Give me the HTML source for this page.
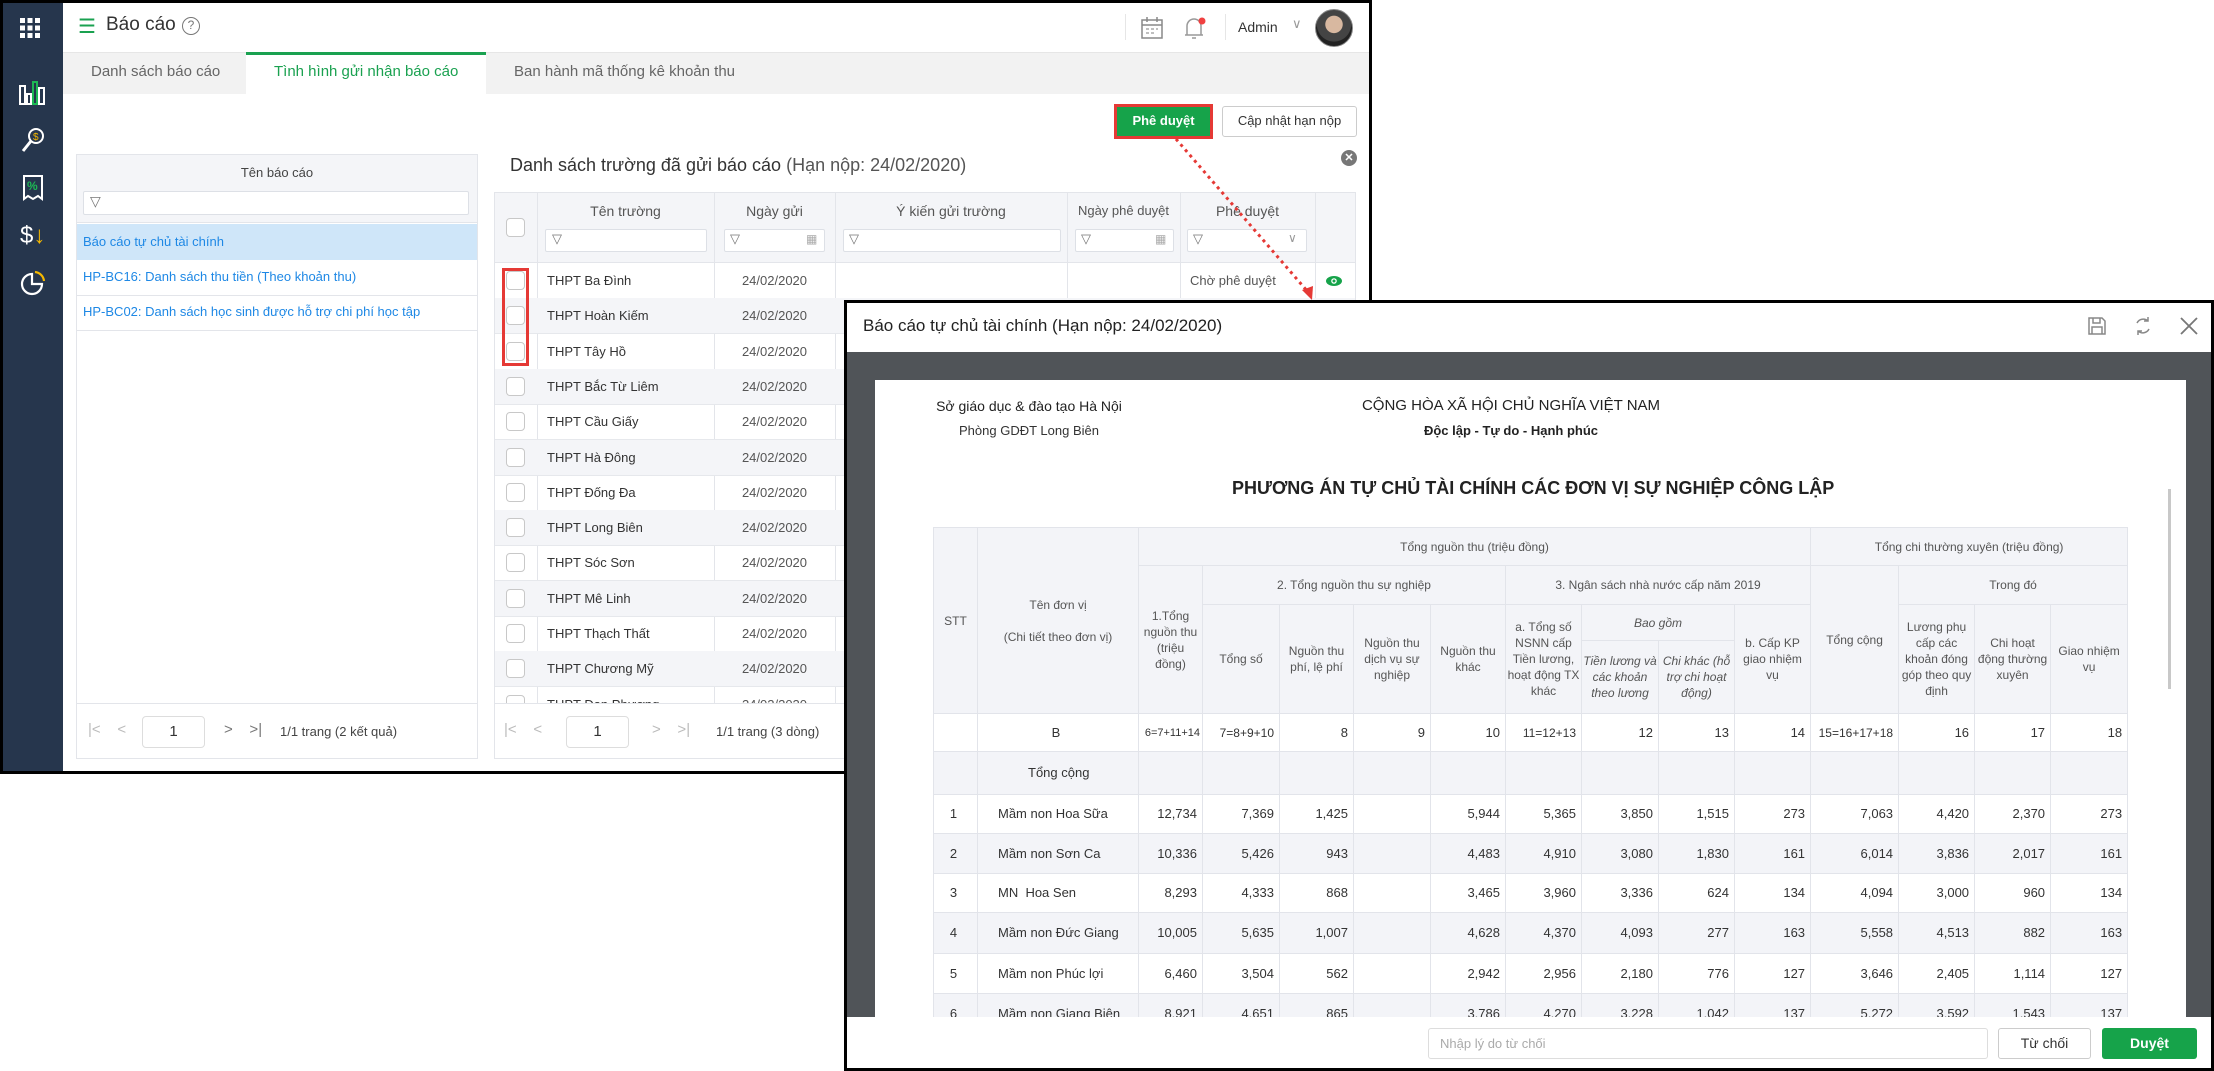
<!DOCTYPE html>
<html><head><meta charset="utf-8"><style>
*{box-sizing:border-box;margin:0;padding:0}
body{width:2214px;height:1071px;position:relative;background:#fff;font-family:"Liberation Sans",sans-serif;color:#333;overflow:hidden}
.a{position:absolute}
.t{position:absolute;white-space:nowrap}
.cb{position:absolute;width:19px;height:19px;border:1px solid #c8c8c8;border-radius:4px;background:#fff}
.fil{position:absolute;background:#fff;border:1px solid #dde0e6;border-radius:2px}
.ft{font-size:14px;color:#555}
table.r{position:absolute;left:933px;top:527px;border-collapse:collapse;table-layout:fixed;width:1194px;font-size:12px;color:#555}
table.r td{border:1px solid #e2e4ea;text-align:center;line-height:16px;padding:0 1px}
table.r thead td{background:#f3f4f8}
table.r tbody td{text-align:right;padding-right:5px;font-size:13px;color:#333}
table.r tbody tr.g td{background:#f3f4f8}
</style></head><body>

<div class="a" style="left:0;top:0;width:1372px;height:774px;border:3px solid #000;background:#fff"></div>
<div class="a" style="left:3px;top:3px;width:60px;height:768px;background:#26364d"></div>
<svg class="a" style="left:18px;top:16px" width="24" height="24" viewBox="0 0 24 24" fill="#fff"><g><rect x="2" y="2" width="5" height="5"/><rect x="9.5" y="2" width="5" height="5"/><rect x="17" y="2" width="5" height="5"/><rect x="2" y="9.5" width="5" height="5"/><rect x="9.5" y="9.5" width="5" height="5"/><rect x="17" y="9.5" width="5" height="5"/><rect x="2" y="17" width="5" height="5"/><rect x="9.5" y="17" width="5" height="5"/><rect x="17" y="17" width="5" height="5"/></g></svg>
<svg class="a" style="left:18px;top:80px" width="28" height="26" viewBox="0 0 28 26" fill="none" stroke-width="2"><rect x="2" y="6" width="5" height="18" stroke="#fff"/><rect x="9" y="14" width="4" height="10" stroke="#fff"/><rect x="15" y="2" width="4" height="22" stroke="#1db954"/><rect x="21" y="8" width="5" height="16" stroke="#fff"/></svg>
<svg class="a" style="left:20px;top:126px" width="26" height="28" viewBox="0 0 26 28" fill="none" stroke="#fff" stroke-width="2"><circle cx="16" cy="10" r="7"/><path d="M11 15 L3 25" stroke-width="3"/><text x="13" y="14" font-size="10" fill="#f5b800" stroke="none" font-family="Liberation Sans">$</text></svg>
<svg class="a" style="left:22px;top:174px" width="22" height="28" viewBox="0 0 22 28" fill="none" stroke="#fff" stroke-width="2"><path d="M2 2 H20 V25 L16 22 L11 25 L6 22 L2 25 Z"/><text x="5" y="16" font-size="12" fill="#1db954" stroke="none" font-family="Liberation Sans" font-weight="bold">%</text></svg>
<div class="t" style="left:20px;top:222px;font-size:24px;color:#fff">$<span style="color:#f5b800">↓</span></div>
<svg class="a" style="left:20px;top:270px" width="26" height="26" viewBox="0 0 26 26" fill="none" stroke-width="2.2"><path d="M12 4 A10 10 0 1 0 22 14 H12 Z" stroke="#fff"/><path d="M15 2 A10 10 0 0 1 24 11" stroke="#f5b800"/></svg>

<div class="a" style="left:63px;top:3px;width:1306px;height:50px;background:#fff;border-bottom:1px solid #e6e6e6"></div>
<div class="t" style="left:78px;top:14px;font-size:20px;color:#1aa150">☰</div>
<div class="t" style="left:106px;top:14px;font-size:19px;color:#333">Báo cáo</div>
<div class="a" style="left:182px;top:17px;width:18px;height:18px;border:1.5px solid #777;border-radius:50%;font-size:12px;color:#777;text-align:center;line-height:15px">?</div>
<div class="a" style="left:1125px;top:14px;width:1px;height:26px;background:#e6e6e6"></div>
<svg class="a" style="left:1140px;top:16px" width="24" height="24" viewBox="0 0 24 24" fill="none" stroke="#888" stroke-width="1.5"><rect x="2" y="4" width="20" height="18"/><path d="M2 9 H22 M7 1 V6 M17 1 V6"/><path d="M6 13 H9 M11 13 H14 M16 13 H18 M6 17 H9 M11 17 H14" stroke="#aaa"/></svg>
<svg class="a" style="left:1182px;top:14px" width="26" height="28" viewBox="0 0 26 28" fill="none" stroke="#999" stroke-width="1.5"><path d="M5 21 V12 A7 7 0 0 1 19 12 V21 Z M3 21 H21 M10 24 H14"/><circle cx="20" cy="7" r="3.5" fill="#f04040" stroke="none"/></svg>
<div class="a" style="left:1225px;top:14px;width:1px;height:26px;background:#e6e6e6"></div>
<div class="t" style="left:1238px;top:19px;font-size:14px;color:#333">Admin</div>
<div class="t" style="left:1292px;top:16px;font-size:13px;color:#999">∨</div>
<div class="a" style="left:1315px;top:9px;width:38px;height:38px;border-radius:50%;background:radial-gradient(circle at 50% 40%,#d8b8a0 0 30%,#444 32% 60%,#222 62%);border:1px solid #888"></div>

<div class="a" style="left:63px;top:53px;width:1306px;height:41px;background:#f2f2f2"></div>
<div class="a" style="left:246px;top:52px;width:240px;height:42px;background:#fff;border-top:3px solid #1aa150"></div>
<div class="t" style="left:91px;top:63px;font-size:15px;color:#666">Danh sách báo cáo</div>
<div class="t" style="left:274px;top:63px;font-size:15px;color:#1aa150">Tình hình gửi nhận báo cáo</div>
<div class="t" style="left:514px;top:63px;font-size:15px;color:#666">Ban hành mã thống kê khoản thu</div>

<div class="a" style="left:1114px;top:104px;width:99px;height:35px;border:3px solid #e53935;background:#16a34a"></div>
<div class="t" style="left:1114px;top:113px;width:99px;text-align:center;font-size:13px;font-weight:bold;color:#fff">Phê duyệt</div>
<div class="a" style="left:1222px;top:106px;width:135px;height:31px;border:1px solid #ccc;border-radius:3px;background:#fff"></div>
<div class="t" style="left:1222px;top:113px;width:135px;text-align:center;font-size:13px;color:#333">Cập nhật hạn nộp</div>

<div class="a" style="left:76px;top:154px;width:402px;height:605px;border:1px solid #e3e5ea;background:#fff"></div>
<div class="a" style="left:77px;top:155px;width:400px;height:68px;background:#f4f5f8;border-bottom:1px solid #e3e5ea"></div>
<div class="t" style="left:77px;top:165px;width:400px;text-align:center;font-size:13px;color:#444">Tên báo cáo</div>
<div class="fil" style="left:83px;top:191px;width:386px;height:24px"></div>
<div class="t" style="left:90px;top:193px;font-size:14px;color:#777">▽</div>
<div class="a" style="left:77px;top:224px;width:400px;height:36px;background:#cfe6f9"></div>
<div class="t" style="left:83px;top:234px;font-size:13px;color:#1e88e5">Báo cáo tự chủ tài chính</div>
<div class="a" style="left:77px;top:295px;width:400px;height:1px;background:#e3e5ea"></div>
<div class="t" style="left:83px;top:269px;font-size:13px;color:#1e88e5">HP-BC16: Danh sách thu tiền (Theo khoản thu)</div>
<div class="a" style="left:77px;top:330px;width:400px;height:1px;background:#e3e5ea"></div>
<div class="t" style="left:83px;top:304px;font-size:13px;color:#1e88e5">HP-BC02: Danh sách học sinh được hỗ trợ chi phí học tập</div>
<div class="a" style="left:77px;top:703px;width:400px;height:1px;background:#e3e5ea"></div>
<div class="t" style="left:88px;top:721px;font-size:15px;color:#bbb">|&lt;&nbsp;&nbsp;&nbsp;&nbsp;&lt;</div>
<div class="a" style="left:142px;top:716px;width:63px;height:32px;border:1px solid #ddd;border-radius:4px"></div>
<div class="t" style="left:142px;top:723px;width:63px;text-align:center;font-size:15px">1</div>
<div class="t" style="left:224px;top:721px;font-size:15px;color:#777">&gt;&nbsp;&nbsp;&nbsp;&nbsp;&gt;|</div>
<div class="t" style="left:280px;top:724px;font-size:13px;color:#444">1/1 trang (2 kết quả)</div>

<div class="t" style="left:510px;top:155px;font-size:18px;color:#333">Danh sách trường đã gửi báo cáo <span style="color:#555">(Hạn nộp: 24/02/2020)</span></div>
<div class="a" style="left:1341px;top:150px;width:16px;height:16px;border-radius:50%;background:#777;color:#fff;font-size:11px;text-align:center;line-height:16px;font-weight:bold">✕</div>
<div class="a" style="left:494px;top:192px;width:862px;height:567px;border:1px solid #e3e5ea"></div>
<div class="a" style="left:495px;top:193px;width:860px;height:70px;background:#f4f5f8;border-bottom:1px solid #e3e5ea"></div>
<div class="a" style="left:537px;top:193px;width:1px;height:510px;background:#e3e5ea"></div>
<div class="a" style="left:714px;top:193px;width:1px;height:510px;background:#e3e5ea"></div>
<div class="a" style="left:835px;top:193px;width:1px;height:510px;background:#e3e5ea"></div>
<div class="a" style="left:1067px;top:193px;width:1px;height:105px;background:#e3e5ea"></div>
<div class="a" style="left:1180px;top:193px;width:1px;height:105px;background:#e3e5ea"></div>
<div class="a" style="left:1315px;top:193px;width:1px;height:105px;background:#e3e5ea"></div>
<div class="cb" style="left:506px;top:218px"></div>
<div class="t ft" style="left:537px;top:203px;width:177px;text-align:center">Tên trường</div>
<div class="t ft" style="left:714px;top:203px;width:121px;text-align:center">Ngày gửi</div>
<div class="t ft" style="left:835px;top:203px;width:232px;text-align:center">Ý kiến gửi trường</div>
<div class="t ft" style="left:1067px;top:203px;width:113px;text-align:center;font-size:13px">Ngày phê duyệt</div>
<div class="t ft" style="left:1180px;top:203px;width:135px;text-align:center">Phê duyệt</div>
<div class="fil" style="left:545px;top:229px;width:162px;height:23px"></div><div class="t" style="left:552px;top:231px;font-size:13px;color:#777">▽</div>
<div class="fil" style="left:724px;top:229px;width:101px;height:23px"></div><div class="t" style="left:730px;top:231px;font-size:13px;color:#777">▽</div><div class="t" style="left:806px;top:232px;font-size:12px;color:#aaa">▦</div>
<div class="fil" style="left:843px;top:229px;width:218px;height:23px"></div><div class="t" style="left:849px;top:231px;font-size:13px;color:#777">▽</div>
<div class="fil" style="left:1075px;top:229px;width:99px;height:23px"></div><div class="t" style="left:1081px;top:231px;font-size:13px;color:#777">▽</div><div class="t" style="left:1155px;top:232px;font-size:12px;color:#aaa">▦</div>
<div class="fil" style="left:1187px;top:229px;width:120px;height:23px"></div><div class="t" style="left:1193px;top:231px;font-size:13px;color:#777">▽</div><div class="t" style="left:1288px;top:231px;font-size:12px;color:#999">∨</div>
<div class="t" style="left:1190px;top:273px;font-size:13px;color:#555">Chờ phê duyệt</div>
<svg class="a" style="left:1325px;top:275px" width="18" height="12" viewBox="0 0 18 12"><ellipse cx="9" cy="6" rx="8" ry="5" fill="#16a34a"/><circle cx="9" cy="6" r="2.8" fill="#fff"/><circle cx="9" cy="6" r="1.5" fill="#16a34a"/></svg>

<div id="rows"></div>
<div class="a" style="left:495px;top:703px;width:860px;height:1px;background:#e3e5ea"></div>
<div class="a" style="left:495px;top:704px;width:860px;height:54px;background:#fff"></div>
<div class="t" style="left:504px;top:721px;font-size:15px;color:#bbb">|&lt;&nbsp;&nbsp;&nbsp;&nbsp;&lt;</div>
<div class="a" style="left:566px;top:716px;width:63px;height:32px;border:1px solid #ddd;border-radius:4px"></div>
<div class="t" style="left:566px;top:723px;width:63px;text-align:center;font-size:15px">1</div>
<div class="t" style="left:652px;top:721px;font-size:15px;color:#bbb">&gt;&nbsp;&nbsp;&nbsp;&nbsp;&gt;|</div>
<div class="t" style="left:716px;top:724px;font-size:13px;color:#444">1/1 trang (3 dòng)</div>

<div class="a" style="left:502px;top:268px;width:27px;height:98px;border:3px solid #e53935"></div>

<svg class="a" style="left:0;top:0" width="2214" height="1071"><line x1="1176" y1="139" x2="1308" y2="292" stroke="#e53935" stroke-width="3" stroke-dasharray="3 4"/><path d="M1302 290 L1312 300 L1313 286 Z" fill="#e53935"/></svg>

<div class="a" style="left:844px;top:300px;width:1370px;height:771px;border:3px solid #000;background:#fff"></div>
<div class="t" style="left:863px;top:316px;font-size:17px;color:#222">Báo cáo tự chủ tài chính (Hạn nộp: 24/02/2020)</div>
<svg class="a" style="left:2087px;top:316px" width="20" height="20" viewBox="0 0 20 20" fill="none" stroke="#888" stroke-width="1.5"><path d="M2 2 H15 L18 5 V18 H2 Z M6 2 V7 H13 V2 M5 18 V11 H15 V18"/></svg>
<svg class="a" style="left:2133px;top:316px" width="20" height="20" viewBox="0 0 20 20" fill="none" stroke="#888" stroke-width="1.5"><path d="M15 5 A7 7 0 0 0 4 7 M5 15 A7 7 0 0 0 16 13 M15 1 V5 H11 M5 19 V15 H9"/></svg>
<svg class="a" style="left:2180px;top:317px" width="18" height="18" viewBox="0 0 18 18" stroke="#777" stroke-width="1.8"><path d="M1 1 L17 17 M17 1 L1 17"/></svg>
<div class="a" style="left:847px;top:352px;width:1364px;height:665px;background:#505458"></div>
<div class="a" style="left:875px;top:380px;width:1311px;height:637px;background:#fff"></div>
<div class="a" style="left:2168px;top:489px;width:3px;height:200px;background:#c8c8c8"></div>

<div class="t" style="left:875px;top:398px;width:308px;text-align:center;font-size:14px;color:#222">Sở giáo dục &amp; đào tạo Hà Nội</div>
<div class="t" style="left:875px;top:423px;width:308px;text-align:center;font-size:13px;color:#333">Phòng GDĐT Long Biên</div>
<div class="t" style="left:1311px;top:397px;width:400px;text-align:center;font-size:15px;color:#222">CỘNG HÒA XÃ HỘI CHỦ NGHĨA VIỆT NAM</div>
<div class="t" style="left:1311px;top:423px;width:400px;text-align:center;font-size:13px;color:#222;font-weight:bold">Độc lập - Tự do - Hạnh phúc</div>
<div class="t" style="left:1232px;top:478px;width:600px;text-align:center;font-size:18px;color:#222;font-weight:bold">PHƯƠNG ÁN TỰ CHỦ TÀI CHÍNH CÁC ĐƠN VỊ SỰ NGHIỆP CÔNG LẬP</div>

<div class="a" style="left:875px;top:380px;width:1293px;height:637px;overflow:hidden">
<table class="r" style="left:58px;top:147px">
<colgroup><col style="width:44px"><col style="width:161px"><col style="width:64px"><col style="width:77px"><col style="width:74px"><col style="width:77px"><col style="width:75px"><col style="width:76px"><col style="width:77px"><col style="width:76px"><col style="width:76px"><col style="width:88px"><col style="width:76px"><col style="width:76px"><col style="width:77px"></colgroup>
<thead>
<tr style="height:38px"><td rowspan="4">STT</td><td rowspan="4">Tên đơn vị<br><br>(Chi tiết theo đơn vị)</td><td colspan="9">Tổng nguồn thu (triệu đồng)</td><td colspan="4">Tổng chi thường xuyên (triệu đồng)</td></tr>
<tr style="height:39px"><td rowspan="3">1.Tổng nguồn thu (triệu đồng)</td><td colspan="4">2. Tổng nguồn thu sự nghiệp</td><td colspan="4">3. Ngân sách nhà nước cấp năm 2019</td><td rowspan="3">Tổng cộng</td><td colspan="3">Trong đó</td></tr>
<tr style="height:36px"><td rowspan="2">Tổng số</td><td rowspan="2">Nguồn thu phí, lệ phí</td><td rowspan="2">Nguồn thu dịch vụ sự nghiệp</td><td rowspan="2">Nguồn thu khác</td><td rowspan="2">a. Tổng số NSNN cấp Tiền lương, hoạt động TX khác</td><td colspan="2"><i>Bao gồm</i></td><td rowspan="2">b. Cấp KP giao nhiệm vụ</td><td rowspan="2">Lương phụ cấp các khoản đóng góp theo quy định</td><td rowspan="2">Chi hoạt động thường xuyên</td><td rowspan="2">Giao nhiệm vụ</td></tr>
<tr style="height:73px"><td><i>Tiền lương và các khoản theo lương</i></td><td><i>Chi khác (hỗ trợ chi hoạt động)</i></td></tr>
</thead>
<tbody>
<tr style="height:38px"><td></td><td style="text-align:center">B</td><td style="font-size:11px;padding-right:2px">6=7+11+14</td><td style="font-size:12px">7=8+9+10</td><td>8</td><td>9</td><td>10</td><td style="font-size:12px">11=12+13</td><td>12</td><td>13</td><td>14</td><td style="font-size:12px">15=16+17+18</td><td>16</td><td>17</td><td>18</td></tr>
<tr class="g" style="height:43px"><td></td><td style="text-align:left;padding-left:50px">Tổng cộng</td><td></td><td></td><td></td><td></td><td></td><td></td><td></td><td></td><td></td><td></td><td></td><td></td><td></td></tr>
<tr style="height:39px"><td style="text-align:center">1</td><td style="text-align:left;padding-left:20px">Mầm non Hoa Sữa</td><td>12,734</td><td>7,369</td><td>1,425</td><td></td><td>5,944</td><td>5,365</td><td>3,850</td><td>1,515</td><td>273</td><td>7,063</td><td>4,420</td><td>2,370</td><td>273</td></tr>
<tr class="g" style="height:40px"><td style="text-align:center">2</td><td style="text-align:left;padding-left:20px">Mầm non Sơn Ca</td><td>10,336</td><td>5,426</td><td>943</td><td></td><td>4,483</td><td>4,910</td><td>3,080</td><td>1,830</td><td>161</td><td>6,014</td><td>3,836</td><td>2,017</td><td>161</td></tr>
<tr style="height:39px"><td style="text-align:center">3</td><td style="text-align:left;padding-left:20px">MN&nbsp; Hoa Sen</td><td>8,293</td><td>4,333</td><td>868</td><td></td><td>3,465</td><td>3,960</td><td>3,336</td><td>624</td><td>134</td><td>4,094</td><td>3,000</td><td>960</td><td>134</td></tr>
<tr class="g" style="height:41px"><td style="text-align:center">4</td><td style="text-align:left;padding-left:20px">Mầm non Đức Giang</td><td>10,005</td><td>5,635</td><td>1,007</td><td></td><td>4,628</td><td>4,370</td><td>4,093</td><td>277</td><td>163</td><td>5,558</td><td>4,513</td><td>882</td><td>163</td></tr>
<tr style="height:40px"><td style="text-align:center">5</td><td style="text-align:left;padding-left:20px">Mầm non Phúc lợi</td><td>6,460</td><td>3,504</td><td>562</td><td></td><td>2,942</td><td>2,956</td><td>2,180</td><td>776</td><td>127</td><td>3,646</td><td>2,405</td><td>1,114</td><td>127</td></tr>
<tr class="g" style="height:40px"><td style="text-align:center">6</td><td style="text-align:left;padding-left:20px">Mầm non Giang Biên</td><td>8,921</td><td>4,651</td><td>865</td><td></td><td>3,786</td><td>4,270</td><td>3,228</td><td>1,042</td><td>137</td><td>5,272</td><td>3,592</td><td>1,543</td><td>137</td></tr>
</tbody></table>
</div>

<div class="a" style="left:847px;top:1017px;width:1364px;height:51px;background:#fff"></div>
<div class="a" style="left:1428px;top:1028px;width:560px;height:31px;border:1px solid #ddd;border-radius:3px"></div>
<div class="t" style="left:1440px;top:1036px;font-size:13px;color:#aaa">Nhập lý do từ chối</div>
<div class="a" style="left:1998px;top:1028px;width:93px;height:31px;border:1px solid #ccc;border-radius:3px"></div>
<div class="t" style="left:1998px;top:1035px;width:93px;text-align:center;font-size:14px;color:#333">Từ chối</div>
<div class="a" style="left:2102px;top:1028px;width:95px;height:31px;background:#16a34a;border-radius:3px"></div>
<div class="t" style="left:2102px;top:1035px;width:95px;text-align:center;font-size:14px;color:#fff;font-weight:bold">Duyệt</div>

<script>
var n=["Ba Đình","Hoàn Kiếm","Tây Hồ","Bắc Từ Liêm","Cầu Giấy","Hà Đông","Đống Đa","Long Biên","Sóc Sơn","Mê Linh","Thạch Thất","Chương Mỹ","Đan Phượng"],h="";
for(var i=0;i<n.length;i++){var y=263+i*35.3;
if(i%2==1)h+='<div class="a" style="left:495px;top:'+y+'px;width:860px;height:35px;background:#f4f5f8"></div>';
h+='<div class="a" style="left:495px;top:'+(y+35)+'px;width:860px;height:1px;background:#e6e8ec"></div>';
h+='<div class="cb" style="left:506px;top:'+(y+8)+'px"></div>';
h+='<div class="t" style="left:547px;top:'+(y+10)+'px;font-size:13px;color:#333">THPT '+n[i]+'</div>';
h+='<div class="t" style="left:714px;top:'+(y+10)+'px;width:121px;text-align:center;font-size:13px;color:#555">24/02/2020</div>';}
document.getElementById("rows").innerHTML=h;
</script>
</body></html>
